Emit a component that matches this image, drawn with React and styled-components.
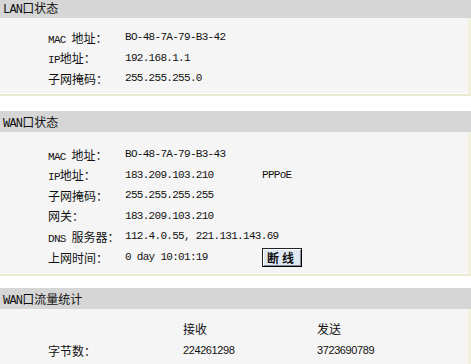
import React from 'react'
import styled, { createGlobalStyle } from 'styled-components'

// router status page: LAN / WAN / traffic blocks
const GlobalStyle = createGlobalStyle`
  html, body {
    margin: 0;
    padding: 0;
    background: #ffffff;
  }
  body {
    font-family: "Liberation Mono", "Noto Sans CJK SC", monospace;
    font-size: 12px;
    color: #111;
  }
`

const Page = styled.div`
  width: 471px;
  margin-top: -3px;
  display: flex;
  flex-direction: column;
`

const Section = styled.section`
  display: flex;
  flex-direction: column;
  margin-bottom: ${p => p.gap || 0}px;
`

const Header = styled.div`
  height: 21px;
  line-height: 21px;
  background: #d6d6d6;
  padding-left: 3px;
  font-size: 12px;
  letter-spacing: -0.8px;
  color: #111;
`

const Body = styled.div`
  background: #f5f5f5;
  border-right: 3px solid #f2f1dd;
  border-bottom: 2px solid #ebe9d2;
  box-shadow: inset 0 -1px 0 #ffffff;
  padding: ${p => p.pad || '10px 0 8px'};
  display: flex;
  flex-direction: column;
`

const Row = styled.div`
  display: grid;
  grid-template-columns: ${p => p.cols || '48px 77px 137px auto'};
  height: ${p => p.h || 20.6}px;
  align-items: center;
  white-space: nowrap;
`

const Label = styled.span`
  font-family: "Liberation Mono", "Noto Sans CJK SC", monospace;
  font-size: 11px;
`

const Cjk = styled.span`
  font-family: "Noto Sans CJK SC", sans-serif;
  font-size: 12px;
  letter-spacing: 0;
`

const Value = styled.span`
  font-family: "Liberation Mono", monospace;
  font-size: 11px;
  letter-spacing: -0.7px;
`

const Plain = styled.span`
  font-family: "Noto Sans CJK SC", sans-serif;
  font-size: 12px;
`

const Digits = styled.span`
  font-family: "Liberation Sans", sans-serif;
  font-size: 11px;
  letter-spacing: -0.4px;
`

const Button = styled.button`
  width: 40px;
  height: 19px;
  padding: 0;
  background: #dfe8f2;
  border: 1px solid #222;
  border-right-color: #000;
  border-bottom-color: #000;
  box-shadow: inset 1px 1px 0 #ffffff, inset -1px -1px 0 #8a9099;
  font-family: "Noto Sans CJK SC", sans-serif;
  font-size: 12px;
  font-weight: 700;
  letter-spacing: 3px;
  color: #111;
  text-align: center;
  line-height: 15px;
`

const lan = [
  ['MAC ', '地址：', 'BO-48-7A-79-B3-42'],
  ['IP', '地址：', '192.168.1.1'],
  ['', '子网掩码：', '255.255.255.0'],
]

const wan = [
  ['MAC ', '地址：', 'BO-48-7A-79-B3-43'],
  ['IP', '地址：', '183.209.103.210', 'PPPoE'],
  ['', '子网掩码：', '255.255.255.255'],
  ['', '网关：', '183.209.103.210'],
  ['DNS ', '服务器：', '112.4.0.55, 221.131.143.69'],
  ['', '上网时间：', '0 day 10:01:19', 'button'],
]

const trafficCols = '48px 135px 134px auto'

function InfoRow({ row }) {
  const [latin, cjk, value, extra] = row
  return (
    <Row>
      <span />
      <Label>
        {latin && <Value>{latin}</Value>}
        <Cjk>{cjk}</Cjk>
      </Label>
      <Value>{value}</Value>
      {extra === 'button' ? (
        <span><Button>断线</Button></span>
      ) : extra ? (
        <Value>{extra}</Value>
      ) : <span />}
    </Row>
  )
}

export default function App() {
  return (
    <>
      <GlobalStyle />
      <Page>
        <Section gap={15}>
          <Header>LAN<Cjk>口状态</Cjk></Header>
          <Body pad="9px 0 5px">
            {lan.map(r => <InfoRow key={r[1] + r[2]} row={r} />)}
          </Body>
        </Section>

        <Section gap={12}>
          <Header>WAN<Cjk>口状态</Cjk></Header>
          <Body pad="12px 0 7px">
            {wan.map(r => <InfoRow key={r[1] + r[2]} row={r} />)}
          </Body>
        </Section>

        <Section>
          <Header>WAN<Cjk>口流量统计</Cjk></Header>
          <Body pad="8px 0 8px">
            <Row cols={trafficCols} h={22}>
              <span />
              <span />
              <Plain>接收</Plain>
              <Plain>发送</Plain>
            </Row>
            <Row cols={trafficCols} h={22}>
              <span />
              <Plain>字节数：</Plain>
              <Digits>224261298</Digits>
              <Digits>3723690789</Digits>
            </Row>
          </Body>
        </Section>
      </Page>
    </>
  )
}
